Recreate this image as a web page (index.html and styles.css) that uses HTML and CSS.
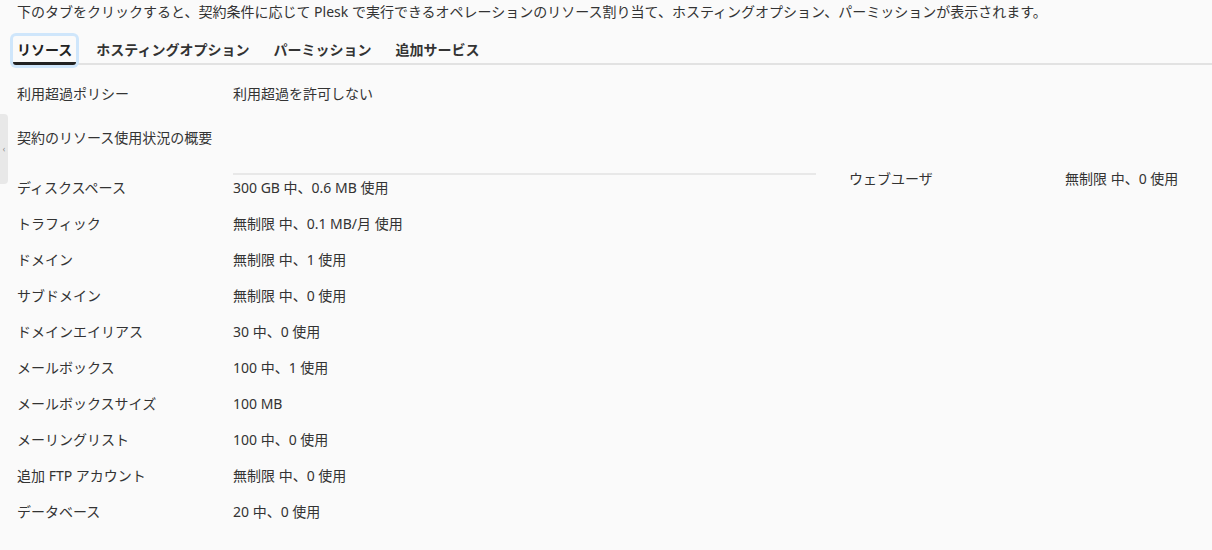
FILE: index.html
```html
<!DOCTYPE html>
<html>
	<head>
		<meta charset="utf-8">
		<title>リソース</title>
		<link rel="stylesheet" href="styles.css">
	</head>
	<body>
		<div class="side-handle">‹</div>
		<p class="intro">下のタブをクリックすると、契約条件に応じて Plesk で実行できるオペレーションのリソース割り当て、ホスティングオプション、パーミッションが表示されます。</p>
		<ul class="tabs">
			<li class="active">リソース</li>
			<li>ホスティングオプション</li>
			<li>パーミッション</li>
			<li>追加サービス</li>
		</ul>
		<div class="content">
			<div class="row">
				<span class="label">利用超過ポリシー</span>
				<span class="value">利用超過を許可しない</span>
			</div>
			<div class="row section">
				<span class="label wide">契約のリソース使用状況の概要</span>
			</div>
			<div class="usage">
				<div class="col-left">
					<div class="row">
						<span class="label">ディスクスペース</span>
						<span class="value">
							<span class="bar"></span>
							300 GB 中、0.6 MB 使用
						</span>
					</div>
					<div class="row">
						<span class="label">トラフィック</span>
						<span class="value">無制限 中、0.1 MB/月 使用</span>
					</div>
					<div class="row">
						<span class="label">ドメイン</span>
						<span class="value">無制限 中、1 使用</span>
					</div>
					<div class="row">
						<span class="label">サブドメイン</span>
						<span class="value">無制限 中、0 使用</span>
					</div>
					<div class="row">
						<span class="label">ドメインエイリアス</span>
						<span class="value">30 中、0 使用</span>
					</div>
					<div class="row">
						<span class="label">メールボックス</span>
						<span class="value">100 中、1 使用</span>
					</div>
					<div class="row">
						<span class="label">メールボックスサイズ</span>
						<span class="value">100 MB</span>
					</div>
					<div class="row">
						<span class="label">メーリングリスト</span>
						<span class="value">100 中、0 使用</span>
					</div>
					<div class="row">
						<span class="label">追加 FTP アカウント</span>
						<span class="value">無制限 中、0 使用</span>
					</div>
					<div class="row">
						<span class="label">データベース</span>
						<span class="value">20 中、0 使用</span>
					</div>
				</div>
				<div class="col-right">
					<div class="row">
						<span class="label">ウェブユーザ</span>
						<span class="value">無制限 中、0 使用</span>
					</div>
				</div>
			</div>
		</div>
	</body>
</html>
```

FILE: styles.css
```css
*{
	padding: 0;
	margin: 0;
	box-sizing: border-box;
}
body{
	background: #fafafa;
	color: #333;
	font: 14px/20px "Noto Sans", "Noto Sans CJK JP", sans-serif;
	position: relative;
}
.side-handle{
	position: absolute;
	left: 0;
	top: 114px;
	width: 8px;
	height: 70px;
	background: #e8e8e8;
	border-radius: 0 4px 4px 0;
	color: #888;
	font-size: 8px;
	line-height: 70px;
	text-align: center;
}
.intro{
	padding-left: 17px;
	line-height: 24px;
}
.tabs{
	display: flex;
	gap: 16px;
	list-style: none;
	margin: 12px 0 0 13px;
	border-bottom: 2px solid #e2e2e2;
}
.tabs li{
	padding: 2px 4px 0;
	line-height: 24px;
	font-weight: bold;
	color: #333;
	border-bottom: 3px solid transparent;
	margin-bottom: -2px;
	border-radius: 3px;
}
.tabs li.active{
	color: #222;
	border-bottom-color: #222;
	box-shadow: 0 0 0 3px #cfe6fb;
}
.content{
	padding: 11px 0 0 17px;
}
.row{
	display: flex;
	align-items: flex-end;
	padding: 8px 0;
}
.row.section{
	padding: 16px 0 13px;
}
.label{
	width: 216px;
	flex-shrink: 0;
}
.label.wide{
	width: auto;
}
.usage{
	display: flex;
	gap: 33px;
}
.col-left{
	width: 799px;
}
.col-left .value{
	flex: 1;
}
.bar{
	display: block;
	height: 2px;
	background: #e8e8e8;
	margin: 4px 0 3px;
}
.col-right{
	flex: 1;
}
```
